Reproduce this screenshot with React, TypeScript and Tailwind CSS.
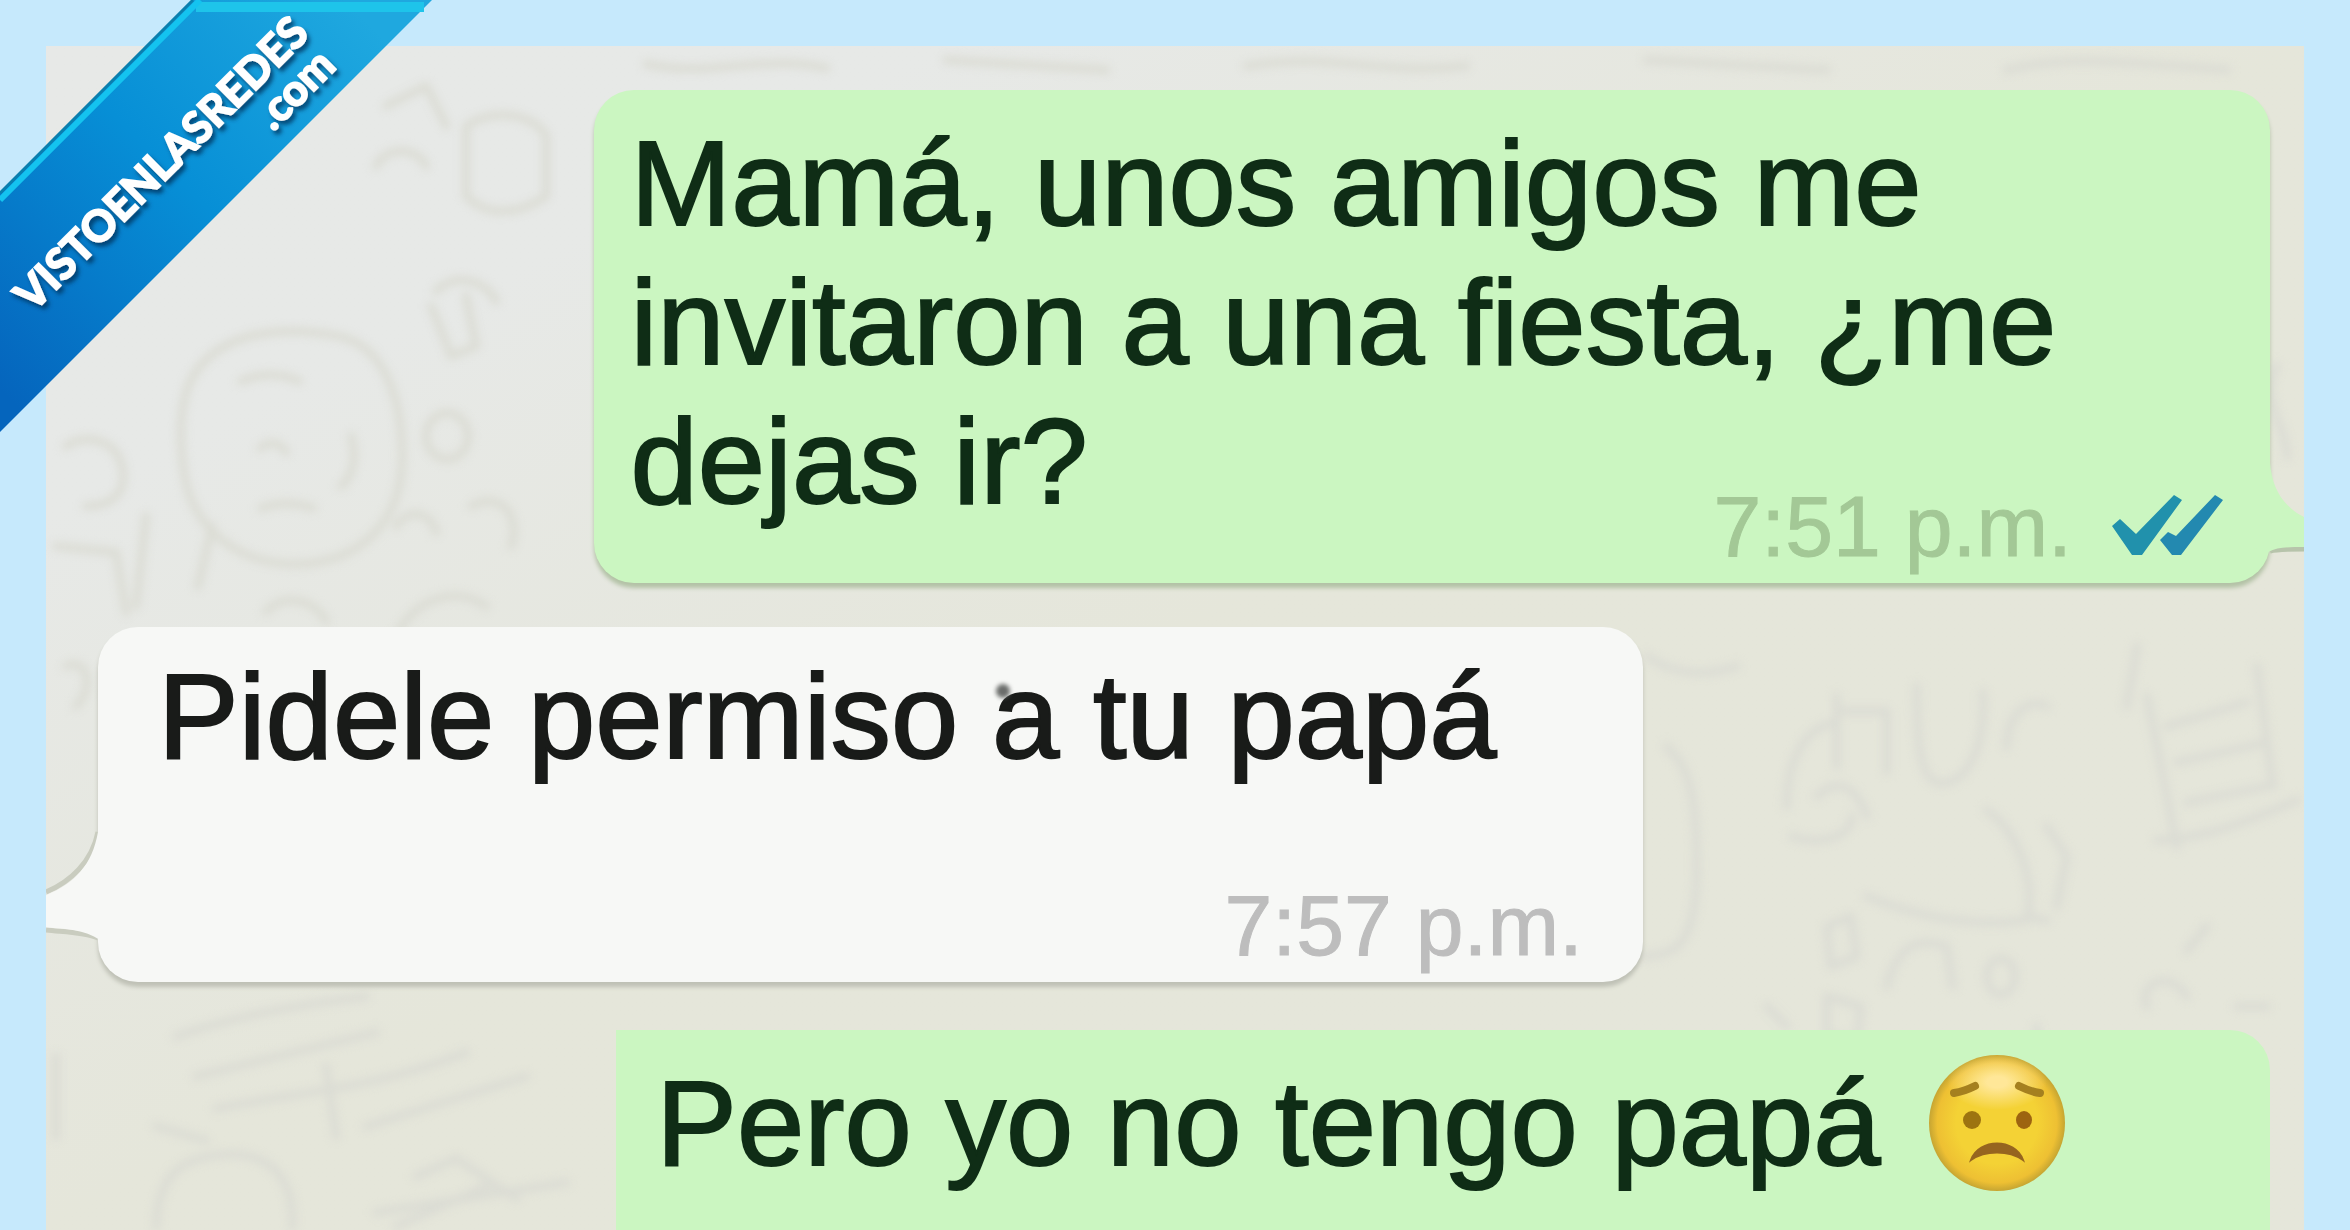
import type { ReactNode } from "react";

function Wallpaper() {
  return (
    <svg
      className="pointer-events-none absolute inset-0 h-full w-full blur-[4px]"
      viewBox="0 0 2257 1184"
      preserveAspectRatio="xMidYMin slice"
      fill="none"
      stroke="#dbdcd4"
      strokeWidth="8"
      strokeLinecap="round"
      strokeLinejoin="round"
      aria-hidden="true"
    >
      <path d="M142 340c20-48 80-64 150-50 50 10 64 70 64 120 0 70-46 108-110 108-60-2-100-40-108-90-4-30-6-60 4-88z" />
      <path d="M195 335c20-8 40-8 58 0M214 402c10-8 20-6 26 4M305 390c6 20 2 40-10 50M215 462c16-6 36-6 52 0M166 480l-14 60" />
      <path d="M390 245c20-20 50-10 60 10M385 260l20 50 25-10-10-50M380 390a20 22 0 1 0 42 0a20 22 0 1 0-42 0" />
      <path d="M425 460c30-16 50 10 40 40M350 480c10-18 34-16 40 6M350 590c20-40 60-50 90-30M220 565c20-20 50-10 60 10" />
      <path d="M420 80c30-20 70-10 80 10v60c-30 20-60 20-80 0zM340 60l40-20 20 40M330 120c10-20 40-20 50 0" />
      <path d="M20 400c20-14 50-6 56 20s-10 40-36 40M10 500l60 6 10 60M100 470l-10 90M20 620c20-10 30 20 10 40" />
      <path d="M130 990c60-20 110-30 190-40M150 1030l180-44M170 1062c80-16 160-20 250-56M320 1080l160-50M290 1090l-10-70" />
      <path d="M110 1184c0-60 30-74 70-76s70 20 66 76M110 1080l50 14M10 1010v80M370 1130l40-18 60 40M330 1166l190-30M440 1140l-90 40" />
      <path d="M1600 610c30 20 60 20 90 10M1620 700c20 20 30 40 30 120s-20 90-60 90M1740 760c0-50 20-80 50-84M1745 790c30 10 60 0 60-20" />
      <path d="M1790 650v70M1790 665h50v60M1870 640c0 40 0 90 20 96s50-20 46-90M1770 750c20-20 40-10 50 20M1820 850c60 24 110 30 160 24 10-40-10-90-40-110" />
      <path d="M1960 700c0-30 20-50 40-40M2000 780l20 30-10 50M2090 600l-10 60M2120 680l80-24M2130 716l90-20M2140 756l80-16M2110 794c60-4 90-20 140-40M2210 620l16 120" />
      <path d="M2100 650l30 150M1780 880l24-10 6 40-26 10zM1840 940c10-40 30-50 60-40l6 40M1940 930a14 18 0 1 0 28 0a14 18 0 1 0-28 0M1990 980c0 60 30 80 70 74M2100 960c-10-20 20-40 40-10M2070 1000c0 20 20 40 40 46" />
      <path d="M1650 1040c30-10 60-20 100-20M1780 950l34 10-4 34-30-6zM1720 960l20 20M1980 870l20 4M2160 880l-20 24M2230 320c-20 30 10 60 10 90M2190 960h30" />
      <path d="M600 18c60 14 120-10 180 4M900 14l160 10M1200 20c80-14 140 10 220 0M1600 14l180 10M1960 24c60-16 140-6 220 0" />
    </svg>
  );
}

function Ribbon() {
  return (
    <svg
      className="pointer-events-none absolute left-0 top-0 z-10"
      width="440"
      height="440"
      viewBox="0 0 440 440"
      role="img"
      aria-label="VISTOENLASREDES.com"
    >
      <defs>
        <linearGradient id="ribbon" x1="1" y1="0" x2="0" y2="1">
          <stop offset="0.1" stopColor="#1fa8df" />
          <stop offset="0.5" stopColor="#078fd6" />
          <stop offset="0.95" stopColor="#0565bd" />
        </linearGradient>
        <filter id="textShadow" x="-10%" y="-10%" width="120%" height="130%">
          <feDropShadow dx="3" dy="4" stdDeviation="2" floodColor="#02345f" floodOpacity="0.8" />
        </filter>
      </defs>
      <path d="M0 192L192 0H432L0 432z" fill="url(#ribbon)" />
      <path d="M196 7H424" stroke="#1ec4ea" strokeWidth="10" />
      <path d="M0 200L200 0" stroke="#14c3ef" strokeWidth="6" />
      <path d="M0 193L193 0" stroke="#0a7fae" strokeWidth="3" />
      <g
        fill="#fff"
        stroke="#fff"
        strokeWidth="2"
        fontFamily="Lato, sans-serif"
        fontWeight="700"
        filter="url(#textShadow)"
      >
        <text transform="translate(33 313) rotate(-45)" fontSize="43">
          VISTOENLASREDES
        </text>
        <text transform="translate(273 132) rotate(-45)" fontSize="43">
          .com
        </text>
      </g>
    </svg>
  );
}

function DoubleCheck() {
  return (
    <svg className="mb-4 h-[66px] w-28 shrink-0" viewBox="0 0 112 66" role="img" aria-label="Leído">
      <path d="M0 34L8 27L24 42L62 3L70 8L30 63L20 63z" fill="#2191ac" />
      <path d="M48 48L56 40L64 44L103 3L111 8L69 63L60 63z" fill="#2389b0" />
    </svg>
  );
}

function WorriedFace() {
  return (
    <svg className="mt-px h-[136px] w-[136px] shrink-0" viewBox="0 0 136 136" role="img" aria-label="Cara preocupada">
      <defs>
        <radialGradient id="face" cx="0.5" cy="0.5" r="0.5">
          <stop offset="0.6" stopColor="#f4d235" />
          <stop offset="0.88" stopColor="#eec033" />
          <stop offset="1" stopColor="#c6a532" />
        </radialGradient>
        <radialGradient id="shine" cx="0.5" cy="0.5" r="0.5">
          <stop offset="0.2" stopColor="#ffe798" />
          <stop offset="1" stopColor="#ffe798" stopOpacity="0" />
        </radialGradient>
      </defs>
      <circle cx="68" cy="68" r="68" fill="url(#face)" />
      <ellipse cx="68" cy="27" rx="50" ry="28" fill="url(#shine)" />
      <g fill="none" stroke="#a5801f" strokeWidth="8" strokeLinecap="round">
        <path d="M25 38C32 37 40 34 46 31" />
        <path d="M111 38C104 37 96 34 90 31" />
      </g>
      <ellipse cx="43" cy="65" rx="9" ry="9" fill="#9d7410" />
      <ellipse cx="95" cy="65" rx="8" ry="9" fill="#9d6410" />
      <path d="M42 105C50 83 86 83 94 105C80 95 56 95 42 105z" fill="#96651f" stroke="#96651f" strokeWidth="2" />
    </svg>
  );
}

function TailRight() {
  return (
    <svg className="absolute bottom-[30px] left-full h-[90px] w-[34px] overflow-visible" viewBox="0 0 34 90" aria-hidden="true">
      <path d="M0 88C8 86 20 86 34 86" stroke="#b7c4ab" strokeWidth="5" fill="none" />
      <path d="M-20 84V0H0C2 26 14 44 34 54V84C18 84 8 84-2 89z" fill="#cbf6c1" />
    </svg>
  );
}

function TailLeft() {
  return (
    <svg className="absolute bottom-[40px] right-full h-[110px] w-[54px] overflow-visible" viewBox="0 0 54 110" aria-hidden="true">
      <path d="M2 60C26 50 48 30 54 0M2 98C20 100 40 100 54 106" stroke="#c9ccbf" strokeWidth="5" fill="none" />
      <path d="M64 106V0H54C48 34 30 52 0 64V95C20 97 40 97 56 108z" fill="#f7f8f6" />
    </svg>
  );
}

function Time({ children }: { children: ReactNode }) {
  return <time className="text-[86px] leading-[96px]">{children}</time>;
}

export default function App() {
  return (
    <div className="relative flex h-screen flex-col overflow-hidden bg-[#c6e9fc] px-[46px] pt-[46px] font-['Liberation_Sans',sans-serif] text-[121px] leading-[139px]">
      <Ribbon />
      <main className="relative flex flex-1 flex-col overflow-hidden bg-linear-to-br from-[#e7e9e7] from-20% to-[#e5e6da] to-50% pl-12 pr-[34px] pt-11">
        <Wallpaper />

        <article className="relative ml-auto flow-root w-[77%] rounded-[40px] bg-[#cbf6c1] pb-[9px] pl-9 pr-[46px] pt-6 text-[#0f2d16] shadow-[0_5px_4px_#b3c2a6]">
          <TailRight />
          <p className="relative [-webkit-text-stroke:2px]">
            Mamá, unos amigos me invitaron a una fiesta, ¿me dejas ir?
            <span className="float-right mt-[86px] flex items-end gap-10 text-[#a3c896] [-webkit-text-stroke:1px]">
              <Time>7:51 p.m.</Time>
              <DoubleCheck />
            </span>
          </p>
        </article>

        <article className="relative ml-1 mt-11 w-[71%] rounded-[40px] bg-[#f7f8f6] pb-[9px] pl-[60px] pr-[60px] pt-5 text-[#191b19] shadow-[0_5px_4px_#bfc1b6]">
          <TailLeft />
          <p className="relative [-webkit-text-stroke:2px]">
            Pidele permiso{" "}
            <span className="relative before:absolute before:left-1 before:top-9 before:size-3.5 before:rounded-full before:bg-[#6b6d6b] before:blur-[2px]">
              a
            </span>{" "}
            tu papá
          </p>
          <div className="relative mt-[91px] flex justify-end text-[#bdbdbd] [-webkit-text-stroke:1px]">
            <Time>7:57 p.m.</Time>
          </div>
        </article>

        <article className="relative ml-auto mt-12 w-[76%] flex-1 rounded-tr-[40px] bg-[#cbf6c1] pl-10 pt-6 text-[#0f2d16]">
          <div className="flex items-start gap-12 whitespace-nowrap">
            <p className="[-webkit-text-stroke:2px]">Pero yo no tengo papá</p>
            <WorriedFace />
          </div>
        </article>
      </main>
    </div>
  );
}
